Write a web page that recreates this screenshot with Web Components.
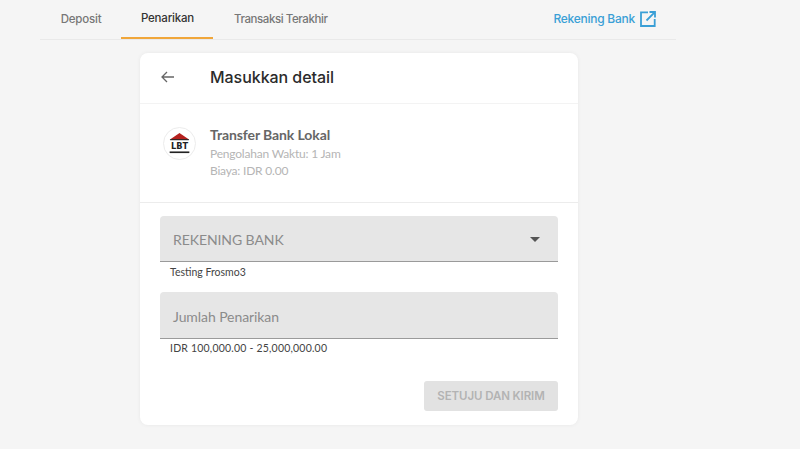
<!DOCTYPE html>
<html lang="id"><head><meta charset="utf-8"><style>
html,body{margin:0;height:100%;background:#f5f5f5;overflow:hidden;font-family:Lato,"Liberation Sans",sans-serif}
</style></head><body>
<app-page>
<tab-bar></tab-bar>
<detail-card></detail-card>
</app-page>
<script>
function def(name,html){customElements.define(name,class extends HTMLElement{constructor(){super();this.attachShadow({mode:'open'}).innerHTML=html}})}
def('app-page',`<style>:host{display:flex;flex-direction:column;width:800px;height:449px;box-sizing:border-box;padding:0 124px 0 40px}</style><slot></slot>`);
def('tab-bar',`<style>
:host{display:flex;height:40px;box-sizing:border-box;border-bottom:1px solid #e9e9e9;align-items:stretch;font:500 11.5px Inter,"Liberation Sans",sans-serif;letter-spacing:-.2px;color:#777;flex:none}
.t{display:flex;align-items:center;justify-content:center;height:37px;box-sizing:border-box}
.a{color:#333;border-bottom:2px solid #f0a63a;height:39px;padding:0 0 2px 1px;width:92px}
.d{width:81px;padding-left:1px}.x{margin-left:21px;letter-spacing:-.42px}
.l{margin-left:auto;display:flex;align-items:center;gap:5px;color:#3a9fd6;padding-right:20px;height:37px;font-size:12px;letter-spacing:-.25px}
</style><div class="t d">Deposit</div><div class="t a">Penarikan</div><div class="t x">Transaksi Terakhir</div>
<div class="l">Rekening Bank<svg width="16" height="16" viewBox="0 0 16 16" fill="none" stroke="#3a9fd6" stroke-width="1.800"><path d="M8 1.300H1v13.700h13.700V8M6.500 9.500 14.600 1.400M9.500 1h5.500v5.500"/></svg></div>`);
def('detail-card',`<style>
:host{display:flex;flex-direction:column;box-sizing:border-box;width:438px;height:372px;margin:13px 0 0 100px;background:#fff;border-radius:8px;box-shadow:0 0 4px rgba(0,0,0,.06)}
.h{display:flex;align-items:center;height:51px;box-sizing:border-box;padding:0 0 2px 21px;border-bottom:1px solid #f3f3f3;flex:none}
.h svg{flex:none;margin-right:36px}
h1{margin:0;font:500 16px Inter,"Liberation Sans",sans-serif;letter-spacing:-.05px;color:#2b2b2b}
.i{display:flex;height:99px;box-sizing:border-box;padding:21px 0 0 23px;border-bottom:1px solid #ececec;flex:none}
.logo{width:33px;height:33px;box-sizing:border-box;border:1px solid #ececec;border-radius:50%;margin:2px 14px 0 0;flex:none;display:flex;align-items:center;justify-content:center}
.n{font-weight:700;font-size:14px;line-height:20px;color:#666;letter-spacing:-.1px}
.s{font-size:12px;line-height:17px;color:#b5b5b5;letter-spacing:-.2px}
.f{display:flex;flex-direction:column;padding:13px 20px 0;flex:1}
.b{display:flex;justify-content:flex-end;margin-top:25px}
button{width:134px;height:30px;border:0;border-radius:3px;background:#e2e2e2;color:#b3b3b3;font:600 11.5px Inter,"Liberation Sans",sans-serif;letter-spacing:-.1px;padding:0}
</style>
<div class="h"><svg width="13" height="12" viewBox="0 0 13 12" fill="none" stroke="#666" stroke-width="1.300"><path d="M13 6H1M6 1 1 6l5 5"/></svg><h1>Masukkan detail</h1></div>
<div class="i"><div class="logo"><svg width="23" height="23" viewBox="0 0 21 21"><path d="M10.500 1 19.500 7H1.500z" fill="#b5211f"/><path d="M2 7h17" stroke="#222" stroke-width="1"/><text x="10.500" y="15.500" text-anchor="middle" font-family="DejaVu Sans,sans-serif" font-weight="700" font-size="7.500" fill="#222">LBT</text><path d="M1.500 18.500h18" stroke="#222" stroke-width="1.500"/></svg></div>
<div><div class="n">Transfer Bank Lokal</div><div class="s">Pengolahan Waktu: 1 Jam</div><div class="s">Biaya: IDR 0.00</div></div></div>
<div class="f"><field-box label="REKENING BANK" hint="Testing Frosmo3" select></field-box><field-box style="margin-top:12px" label="Jumlah Penarikan" hint="IDR 100,000.00 - 25,000,000.00" wide></field-box>
<div class="b"><button>SETUJU DAN KIRIM</button></div></div>`);
customElements.define('field-box',class extends HTMLElement{constructor(){super();this.attachShadow({mode:'open'})}
connectedCallback(){const wide=this.hasAttribute('wide');this.shadowRoot.innerHTML=`<style>
:host{display:block;flex:none}
.w{height:${wide?46:45}px;box-sizing:content-box;background:#e6e6e6;border-bottom:1px solid #9a9a9a;border-radius:4px 4px 0 0;display:flex;align-items:center;justify-content:space-between;padding:0 18px 0 13px;font-size:14px;color:#8b8b8b;letter-spacing:-.08px}
span{padding-top:2px}
i{width:0;height:0;border:5px solid transparent;border-top-color:#555;border-bottom:0;display:block;margin-top:2px}
.h{font-size:10.500px;line-height:15px;height:15px;margin-top:${wide?2:3}px;padding-left:10px;color:#444}
.wide{letter-spacing:.2px}
</style><div class="w"><span>${this.getAttribute('label')}</span>${this.hasAttribute('select')?'<i></i>':''}</div><div class="h ${wide?'wide':''}">${this.getAttribute('hint')}</div>`}});
</script></body></html>
